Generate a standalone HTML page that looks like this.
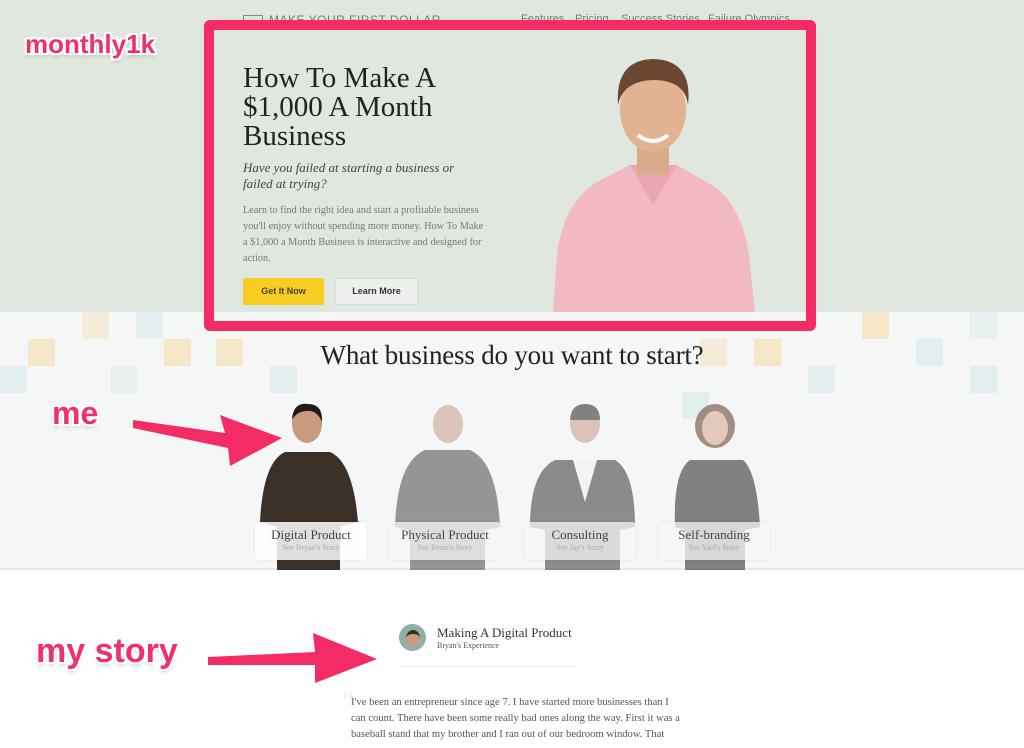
<!DOCTYPE html>
<html><head><meta charset="utf-8"><style>
*{margin:0;padding:0;box-sizing:border-box}
body{width:1024px;height:748px;overflow:hidden;position:relative;background:#fff;font-family:"Liberation Serif",serif;color:#333}
.abs{position:absolute}
.hero{left:0;top:0;width:1024px;height:312px;background:#dfe7df}
.mosaic{left:0;top:312px;width:1024px;height:258px;background:#f5f7f7;overflow:hidden}
.sq{position:absolute;width:27px;height:27px}
.nav{top:13px;font-family:"Liberation Sans",sans-serif;font-size:11px;color:#777}
.frame{left:204px;top:20px;width:612px;height:311px;border:10px solid #f42c66;border-radius:6px}
.lbl{font-family:"Liberation Sans",sans-serif;font-weight:bold;color:#f0306a;font-size:30px;text-shadow:-2px -2px 0 #fff,2px -2px 0 #fff,-2px 2px 0 #fff,2px 2px 0 #fff,0 2px 0 #fff,0 -2px 0 #fff,2px 0 0 #fff,-2px 0 0 #fff,0 3px 4px rgba(0,0,0,.25)}
.card{top:522px;width:112px;height:38px;background:rgba(255,255,255,.85);border-radius:4px;text-align:center;box-shadow:0 0 2px rgba(0,0,0,.1)}
.card b{display:block;font-weight:normal;font-size:13px;color:#444;margin-top:5px}
.card i{display:block;font-style:normal;font-size:8px;color:#aaa}
</style></head><body>
<div class="abs hero"></div>
<div class="abs mosaic">
<div class="sq" style="left:28px;top:27px;background:#f6e7c9"></div>
<div class="sq" style="left:82px;top:0;background:#f4ecd8"></div>
<div class="sq" style="left:136px;top:0;background:#e3eef0"></div>
<div class="sq" style="left:0;top:54px;background:#e2eef0"></div>
<div class="sq" style="left:164px;top:27px;background:#f6e7c9"></div>
<div class="sq" style="left:216px;top:27px;background:#f6e7c9"></div>
<div class="sq" style="left:270px;top:54px;background:#e3eef0"></div>
<div class="sq" style="left:110px;top:54px;background:#e8f0f0"></div>
<div class="sq" style="left:754px;top:27px;background:#f6e7c9"></div>
<div class="sq" style="left:808px;top:54px;background:#e3eef0"></div>
<div class="sq" style="left:862px;top:0;background:#f6e7c9"></div>
<div class="sq" style="left:916px;top:27px;background:#e3eef0"></div>
<div class="sq" style="left:970px;top:54px;background:#e3eef0"></div>
<div class="sq" style="left:700px;top:27px;background:#f4ecd8"></div>
<div class="sq" style="left:970px;top:0;background:#e8f0f0"></div>
<div class="sq" style="left:682px;top:80px;background:#e3eef0"></div>
</div>
<div class="abs" style="left:0;top:568px;width:1024px;height:2px;background:#e8e8e8"></div>

<div class="abs nav" style="left:243px;font-size:12px;letter-spacing:.5px"><span style="display:inline-block;width:20px;height:9px;border:1px solid #888;margin-right:6px"></span>MAKE YOUR FIRST DOLLAR</div>
<div class="abs nav" style="left:521px">Features</div>
<div class="abs nav" style="left:575px">Pricing</div>
<div class="abs nav" style="left:621px">Success Stories</div>
<div class="abs nav" style="left:708px">Failure Olympics</div>

<div class="abs" style="left:243px;top:64px;font-size:29px;line-height:29px;color:#222">How To Make A<br>$1,000 A Month<br>Business</div>
<div class="abs" style="left:243px;top:160px;font-size:13px;line-height:16px;font-style:italic;color:#444">Have you failed at starting a business or<br>failed at trying?</div>
<div class="abs" style="left:243px;top:203px;font-size:10.3px;line-height:16px;color:#777;width:250px">Learn to find the right idea and start a profitable business<br>you'll enjoy without spending more money. How To Make<br>a $1,000 a Month Business is interactive and designed for<br>action.</div>
<div class="abs" style="left:243px;top:278px;width:81px;height:27px;background:#f8cd22;border-radius:2px;font-family:'Liberation Sans',sans-serif;font-size:9px;font-weight:bold;color:#443;text-align:center;line-height:27px">Get It Now</div>
<div class="abs" style="left:335px;top:278px;width:83px;height:27px;background:#eef0ee;border:1px solid #d8dcd8;border-radius:2px;font-family:'Liberation Sans',sans-serif;font-size:9px;font-weight:bold;color:#333;text-align:center;line-height:25px">Learn More</div>

<svg class="abs" style="left:545px;top:55px" width="215" height="257">
<path d="M8 257 L12 200 Q18 150 50 128 L85 110 L132 110 L170 132 Q200 155 205 210 L210 257Z" fill="#f3b9c3"/>
<path d="M85 110 L108 150 L132 110Z" fill="#e9a7b4"/>
<rect x="92" y="80" width="32" height="40" fill="#dba98c"/>
<ellipse cx="108" cy="55" rx="33" ry="42" fill="#e2b293"/>
<path d="M73 50 Q70 5 108 4 Q148 5 143 50 Q140 25 108 25 Q78 26 73 50Z" fill="#6b4630"/>
<path d="M93 80 Q108 92 123 80" stroke="#fff" stroke-width="4" fill="none"/>
</svg>

<div class="abs frame"></div>
<div class="abs lbl" style="left:25px;top:29px;font-size:26px">monthly1k</div>

<div class="abs" style="left:0;top:340px;width:1024px;text-align:center;font-size:27px;color:#222;letter-spacing:-.2px">What business do you want to start?</div>

<svg class="abs" style="left:255px;top:402px" width="520" height="168">
<g>
<ellipse cx="52" cy="22" rx="15" ry="19" fill="#c99a7e"/><path d="M37 18 Q38 0 53 2 Q68 2 67 20 Q62 8 52 9 Q42 9 37 18Z" fill="#221a14"/>
<path d="M5 120 Q8 60 30 50 L75 50 Q98 60 103 120 L85 125 L85 168 L22 168 L22 125Z" fill="#3a3028"/>
</g>
<g opacity=".6">
<ellipse cx="193" cy="22" rx="15" ry="19" fill="#c9a390"/>
<path d="M140 125 Q142 60 170 48 L215 48 Q242 60 245 125 L230 128 L230 168 L155 168 L155 128Z" fill="#555"/>
<ellipse cx="330" cy="22" rx="15" ry="19" fill="#c9a390"/><path d="M315 18 Q316 2 330 2 Q345 2 345 18Z" fill="#333"/>
<path d="M275 125 Q275 70 300 58 L360 58 Q380 70 380 125 L365 128 L365 168 L290 168 L290 128Z" fill="#444"/>
<path d="M318 58 L330 100 L342 58Z" fill="#f2f2f2"/>
<ellipse cx="460" cy="24" rx="20" ry="22" fill="#6e4a38"/><ellipse cx="460" cy="26" rx="13" ry="17" fill="#d6ab96"/>
<path d="M420 125 Q418 70 435 58 L488 58 Q502 70 505 125 L490 128 L490 168 L430 168 L430 128Z" fill="#333"/>
</g>
</svg>
<div class="abs card" style="left:255px"><b>Digital Product</b><i>See Bryan's Story</i></div>
<div class="abs card" style="left:389px;background:rgba(245,245,245,.75)"><b>Physical Product</b><i>See Brian's Story</i></div>
<div class="abs card" style="left:524px;background:rgba(245,245,245,.75)"><b>Consulting</b><i>See Jay's Story</i></div>
<div class="abs card" style="left:658px;background:rgba(245,245,245,.75)"><b>Self-branding</b><i>See Yael's Story</i></div>

<svg class="abs" style="left:130px;top:400px" width="160" height="70"><path d="M3 20 L95 33 L90 15 L152 38 L100 66 L98 48 L3 28Z" fill="#f42c66"/></svg>
<div class="abs lbl" style="left:52px;top:395px;font-size:32px">me</div>
<svg class="abs" style="left:205px;top:625px" width="175" height="60"><path d="M3 32 L110 27 L108 8 L172 34 L110 58 L110 40 L3 40Z" fill="#f42c66"/></svg>
<div class="abs lbl" style="left:36px;top:632px;font-size:34px">my story</div>

<div class="abs" style="left:399px;top:624px;width:27px;height:27px;border-radius:50%;background:#8fb0a8;overflow:hidden"><div style="margin:6px auto 0;width:14px;height:16px;border-radius:50%;background:#c99a7e;border-top:4px solid #3a2a20"></div></div>
<div class="abs" style="left:437px;top:625px;font-size:13px;color:#333">Making A Digital Product</div>
<div class="abs" style="left:437px;top:641px;font-size:8px;color:#555">Bryan's Experience</div>
<div class="abs" style="left:400px;top:666px;width:176px;height:1px;background:#eee"></div>
<div class="abs" style="left:342px;top:692px;font-size:28px;color:#eee;line-height:20px">“</div>
<div class="abs" style="left:351px;top:695px;font-size:10.6px;line-height:16px;color:#555;white-space:nowrap">I've been an entrepreneur since age 7. I have started more businesses than I<br>can count. There have been some really bad ones along the way. First it was a<br>baseball stand that my brother and I ran out of our bedroom window. That</div>
</body></html>
